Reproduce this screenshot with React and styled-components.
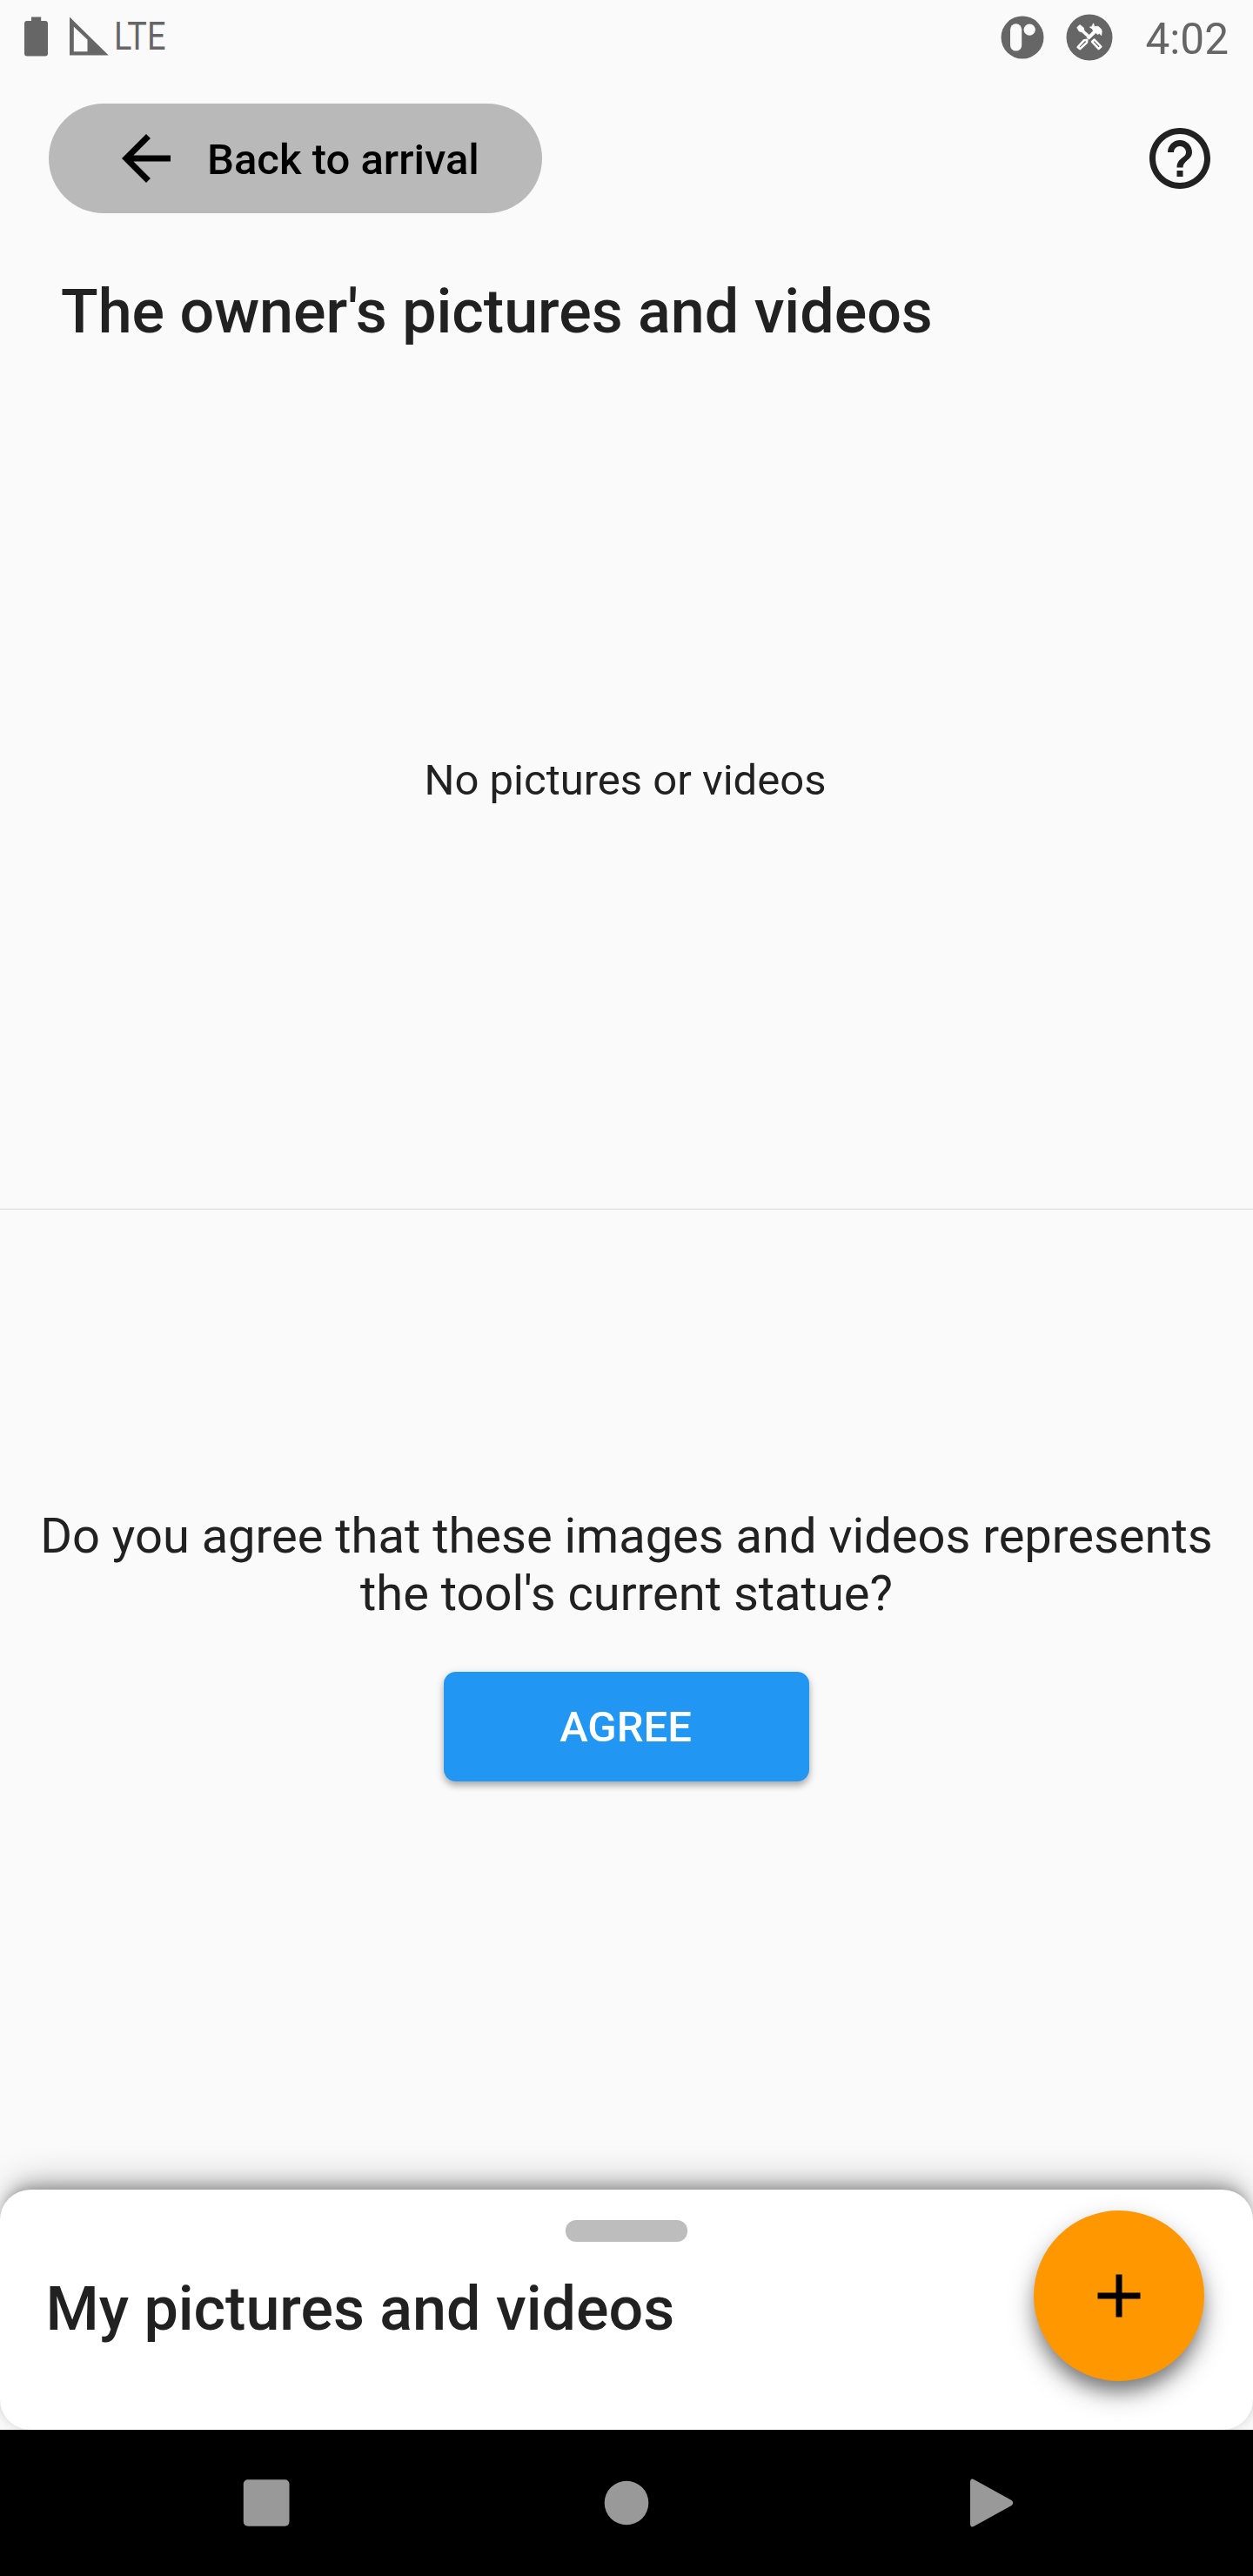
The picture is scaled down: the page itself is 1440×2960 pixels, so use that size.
import React from "react";
import styled, { createGlobalStyle } from "styled-components";

const GlobalStyle = createGlobalStyle`
  *, *::before, *::after { box-sizing: border-box; }
  body { margin: 0; background: #fafafa; }
  button { font: inherit; border: 0; margin: 0; padding: 0; cursor: pointer; }
`;

const Screen = styled.div`
  display: flex;
  flex-direction: column;
  width: 1440px;
  height: 2960px;
  overflow: hidden;
  background: #fafafa;
  color: #212121;
  font-family: Roboto, "Liberation Sans", sans-serif;
`;

const StatusBar = styled.header`
  display: flex;
  justify-content: space-between;
  height: 84px;
  flex: none;
  padding: 0 28px;
  color: #666;
`;

const StatusGroup = styled.div`
  display: flex;
  align-items: flex-start;
`;

const StatusIcon = styled.svg`
  display: block;
  flex: none;
  width: ${(p) => p.$w}px;
  height: ${(p) => p.$h}px;
  margin-top: ${(p) => p.$top}px;
  margin-left: ${(p) => p.$left || 0}px;
`;

const NetworkLabel = styled.span`
  margin: 17px 0 0 5.5px;
  font-size: 43.5px;
  line-height: 51px;
  transform: scaleX(0.87);
  transform-origin: left;
`;

const Clock = styled.span`
  margin: 15.5px 0 0 37.3px;
  font-size: 49.5px;
  line-height: 58px;
`;

const Toolbar = styled.nav`
  display: flex;
  justify-content: space-between;
  align-items: center;
  flex: none;
  height: 126px;
  margin-top: 35px;
  padding: 0 42px 0 56px;
`;

const BackButton = styled.button`
  display: flex;
  align-items: center;
  gap: 28px;
  width: 567px;
  height: 126px;
  padding: 0 70px;
  border-radius: 63px;
  background: #b9b9b9;
  color: #000;
  font-size: 49px;
  font-weight: 500;
  line-height: 57px;
  white-space: nowrap;
`;

const ButtonLabel = styled.span`
  margin-top: 2px;
`;

const IconButton = styled.button`
  background: none;
  color: #212121;
`;

const MaterialIcon = styled.svg`
  display: block;
  flex: none;
  width: 84px;
  height: 84px;
  fill: currentColor;
`;

const Heading = styled.h1`
  margin: 0;
  font-size: 70px;
  font-weight: 500;
  line-height: 82px;
  white-space: nowrap;
`;

const OwnerSection = styled.section`
  display: flex;
  flex-direction: column;
  flex: none;
  height: 1143px;
  padding: 72px 70px 0;
`;

const EmptyState = styled.div`
  display: flex;
  flex: 1;
  align-items: center;
  justify-content: center;
  padding: 5px 3px 0 0;
  font-size: 49px;
  line-height: 57px;
`;

const Divider = styled.hr`
  flex: none;
  width: 100%;
  height: 2px;
  margin: 0;
  border: 0;
  border-top: 1px solid #f0f0f0;
  background: #e1e1e1;
`;

const ConsentSection = styled.section`
  display: flex;
  flex-direction: column;
  align-items: center;
  flex: 1;
  padding-top: 342px;
`;

const Question = styled.p`
  margin: 0;
  font-size: 56px;
  line-height: 66px;
  text-align: center;
  white-space: nowrap;
`;

const AgreeButton = styled.button`
  width: 420px;
  height: 126px;
  margin-top: 56.5px;
  padding: 2px 2px 0 0;
  border-radius: 14px;
  background: #2196f3;
  color: #fff;
  font-size: 49px;
  font-weight: 500;
  box-shadow: 0 5px 7px rgba(0, 0, 0, 0.22), 0 3px 12px rgba(0, 0, 0, 0.14);
`;

const Sheet = styled.section`
  display: flex;
  flex-direction: column;
  flex: none;
  height: 276.5px;
  border-radius: 35px;
  background: #fff;
  box-shadow:
    0 0 12px rgba(0, 0, 0, 0.14),
    0 -14px 20px -9px rgba(0, 0, 0, 0.24),
    0 -20px 42px -12px rgba(0, 0, 0, 0.24);
`;

const DragHandle = styled.div`
  flex: none;
  align-self: center;
  width: 140px;
  height: 24.5px;
  margin-top: 35.5px;
  border-radius: 12px;
  background: #bdbdbd;
`;

const SheetRow = styled.div`
  display: flex;
  justify-content: space-between;
  align-items: flex-start;
  margin-top: -36px;
  padding: 0 56px 0 52.5px;
`;

const SheetHeading = styled(Heading)`
  margin-top: 72px;
`;

const AddButton = styled.button`
  display: flex;
  align-items: center;
  justify-content: center;
  width: 196px;
  height: 196px;
  border-radius: 50%;
  background: #ff9800;
  color: #000;
  box-shadow: 0 14px 20px -3px rgba(0, 0, 0, 0.36), 0 14px 32px 0 rgba(0, 0, 0, 0.27);
`;

const NavigationBar = styled.footer`
  display: flex;
  align-items: center;
  justify-content: space-between;
  flex: none;
  height: 168px;
  padding: 0 274px;
  background: #000;
`;

const NavIcon = styled.svg`
  display: block;
  width: 64px;
  height: 64px;
  fill: #999;
`;

const BatteryIcon = () => (
  <StatusIcon $w={27} $h={46} $top={19} viewBox="0 0 27 46" fill="currentColor">
    <path d="M8 0.5h11.2V5H24a3 3 0 0 1 3 3v34.500a3 3 0 0 1-3 3H3a3 3 0 0 1-3-3V8a3 3 0 0 1 3-3h5z" />
  </StatusIcon>
);

const SignalIcon = () => (
  <StatusIcon $w={45} $h={45} $top={19} $left={25} viewBox="0 0 45 45" fill="currentColor" fillRule="evenodd">
    <path d="M0 0.500L44.700 44.500H0zM4.800 11.800V40.200H20.500V26.500z" />
  </StatusIcon>
);

const BadgeIcon = () => (
  <StatusIcon $w={50} $h={50} $top={17.5} viewBox="0 0 50 50">
    <circle cx="25" cy="25" r="24.500" fill="currentColor" />
    <rect x="11" y="9.300" width="13.200" height="31.300" rx="6.600" fill="#fafafa" />
    <circle cx="33.200" cy="16.200" r="6.600" fill="#fafafa" />
  </StatusIcon>
);

const ToolsIcon = () => (
  <StatusIcon $w={54} $h={54} $top={15.5} $left={25} viewBox="316 46.500 162 162">
    <circle cx="397" cy="127.500" r="79.500" fill="currentColor" />
    <g fill="#fff" stroke="#fff" strokeWidth="2" strokeLinejoin="round">
      <path d="M354 93L364 84L377 94L379 104L397 120L390 127L372 110L361 106Z" />
      <path d="M398 92L405 90L411 79L414 90L427 89L438 99L440 108L438 121L432 114L425 117L419 112L396 134L388 128L410 105L407 98Z" />
    </g>
    <g fill="none" stroke="#fff" strokeWidth="7.500" strokeLinejoin="round">
      <path d="M357 161L379 137L389 136L388 145L365 167Z" />
      <path d="M406 142L414 135L437 159L429 167Z" />
    </g>
  </StatusIcon>
);

const BackArrowIcon = () => (
  <MaterialIcon viewBox="0 0 24 24">
    <path d="M20 11H7.830l5.590-5.590L12 4l-8 8 8 8 1.410-1.410L7.830 13H20v-2z" />
  </MaterialIcon>
);

const HelpIcon = () => (
  <MaterialIcon viewBox="0 0 24 24">
    <path d="M11 18h2v-2h-2v2zm1-16C6.480 2 2 6.480 2 12s4.480 10 10 10 10-4.480 10-10S17.520 2 12 2zm0 18c-4.410 0-8-3.590-8-8s3.590-8 8-8 8 3.590 8 8-3.590 8-8 8zm0-14c-2.210 0-4 1.790-4 4h2c0-1.100.9-2 2-2s2 .9 2 2c0 2-3 1.750-3 5h2c0-2.250 3-2.500 3-5 0-2.210-1.790-4-4-4z" />
  </MaterialIcon>
);

const PlusIcon = () => (
  <MaterialIcon viewBox="0 0 24 24">
    <path d="M19 13h-6v6h-2v-6H5v-2h6V5h2v6h6v2z" />
  </MaterialIcon>
);

export default function App() {
  return (
    <>
      <GlobalStyle />
      <Screen>
        <StatusBar>
          <StatusGroup>
            <BatteryIcon />
            <SignalIcon />
            <NetworkLabel>LTE</NetworkLabel>
          </StatusGroup>
          <StatusGroup>
            <BadgeIcon />
            <ToolsIcon />
            <Clock>4:02</Clock>
          </StatusGroup>
        </StatusBar>
        <Toolbar>
          <BackButton>
            <BackArrowIcon />
            <ButtonLabel>Back to arrival</ButtonLabel>
          </BackButton>
          <IconButton aria-label="Help">
            <HelpIcon />
          </IconButton>
        </Toolbar>
        <OwnerSection>
          <Heading>The owner's pictures and videos</Heading>
          <EmptyState>No pictures or videos</EmptyState>
        </OwnerSection>
        <Divider />
        <ConsentSection>
          <Question>
            Do you agree that these images and videos represents
            <br />
            the tool's current statue?
          </Question>
          <AgreeButton>AGREE</AgreeButton>
        </ConsentSection>
        <Sheet>
          <DragHandle />
          <SheetRow>
            <SheetHeading as="h2">My pictures and videos</SheetHeading>
            <AddButton aria-label="Add">
              <PlusIcon />
            </AddButton>
          </SheetRow>
        </Sheet>
        <NavigationBar>
          <NavIcon viewBox="0 0 64 64">
            <rect x="5.800" y="5.300" width="52.700" height="53.400" rx="5" />
          </NavIcon>
          <NavIcon viewBox="0 0 64 64">
            <circle cx="32" cy="32" r="25.300" />
          </NavIcon>
          <NavIcon viewBox="0 0 64 64">
            <path d="M13 8.500Q13 2.500 18 5.500L60.500 29Q64 32 60.500 35L18 58.500Q13 61.500 13 55.500Z" />
          </NavIcon>
        </NavigationBar>
      </Screen>
    </>
  );
}
